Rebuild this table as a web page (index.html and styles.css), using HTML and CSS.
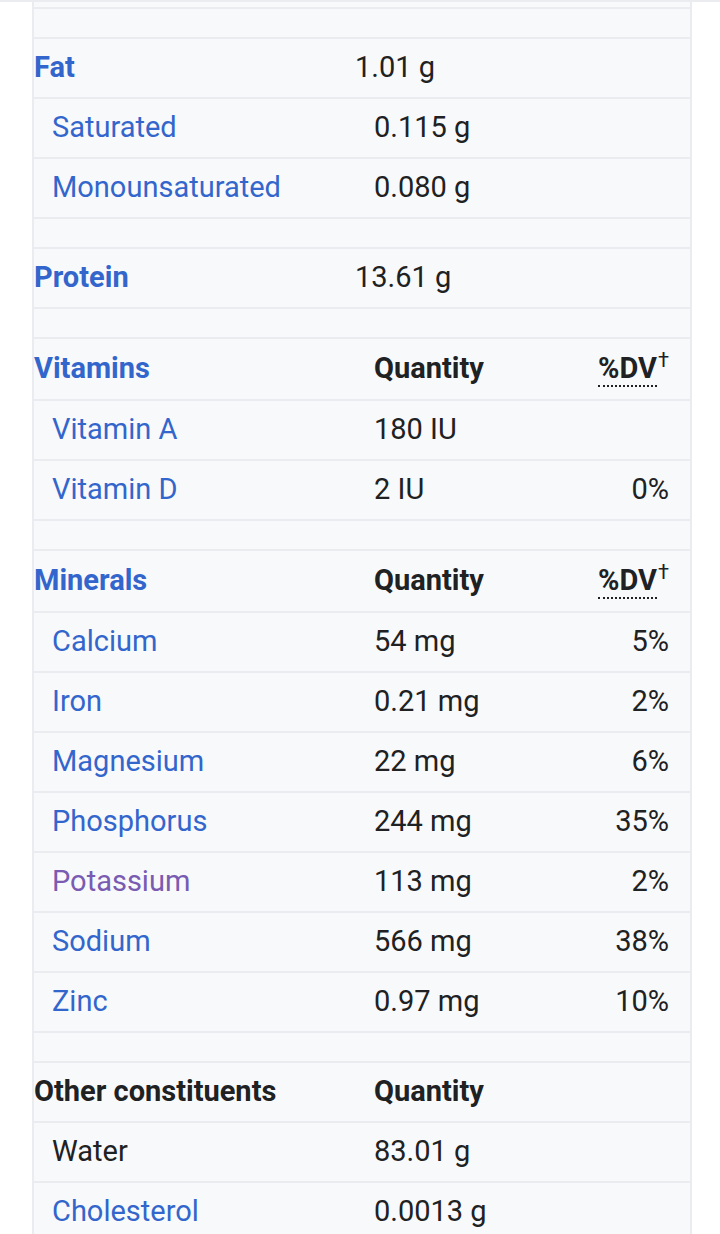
FILE: index.html
```html
<!DOCTYPE html>
<html lang="en">
<head>
<meta charset="utf-8">
<link rel="stylesheet" href="styles.css">
</head>
<body>
<div class="topline"></div>
<table class="nut">
  <colgroup><col class="c1"><col class="c2"><col class="c3"></colgroup>
  <tbody>
    <tr class="partial"><td colspan="3"></td></tr>
    <tr class="gap"><td colspan="3"></td></tr>
    <tr class="main"><th><a class="lnk">Fat</a></th><td>1.01 g</td><td></td></tr>
    <tr class="sub"><td><a class="lnk">Saturated</a></td><td class="val">0.115 g</td><td></td></tr>
    <tr class="sub"><td><a class="lnk">Monounsaturated</a></td><td class="val">0.080 g</td><td></td></tr>
    <tr class="gap"><td colspan="3"></td></tr>
    <tr class="main"><th><a class="lnk">Protein</a></th><td>13.61 g</td><td></td></tr>
    <tr class="gap"><td colspan="3"></td></tr>
    <tr class="head"><th><a class="lnk">Vitamins</a></th><th class="q">Quantity</th><th class="dv"><abbr class="abbr">%DV</abbr><sup class="dag">†</sup></th></tr>
    <tr class="sub"><td><a class="lnk">Vitamin A</a></td><td class="val">180 IU</td><td class="pct"></td></tr>
    <tr class="sub"><td><a class="lnk">Vitamin D</a></td><td class="val">2 IU</td><td class="pct">0%</td></tr>
    <tr class="gap"><td colspan="3"></td></tr>
    <tr class="head"><th><a class="lnk">Minerals</a></th><th class="q">Quantity</th><th class="dv"><abbr class="abbr">%DV</abbr><sup class="dag">†</sup></th></tr>
    <tr class="sub"><td><a class="lnk">Calcium</a></td><td class="val">54 mg</td><td class="pct">5%</td></tr>
    <tr class="sub"><td><a class="lnk">Iron</a></td><td class="val">0.21 mg</td><td class="pct">2%</td></tr>
    <tr class="sub"><td><a class="lnk">Magnesium</a></td><td class="val">22 mg</td><td class="pct">6%</td></tr>
    <tr class="sub"><td><a class="lnk">Phosphorus</a></td><td class="val">244 mg</td><td class="pct">35%</td></tr>
    <tr class="sub"><td><a class="lnk visited">Potassium</a></td><td class="val">113 mg</td><td class="pct">2%</td></tr>
    <tr class="sub"><td><a class="lnk">Sodium</a></td><td class="val">566 mg</td><td class="pct">38%</td></tr>
    <tr class="sub"><td><a class="lnk">Zinc</a></td><td class="val">0.97 mg</td><td class="pct">10%</td></tr>
    <tr class="gap"><td colspan="3"></td></tr>
    <tr class="head plain"><th class="dark">Other constituents</th><th class="q">Quantity</th><th></th></tr>
    <tr class="sub"><td>Water</td><td class="val">83.01 g</td><td></td></tr>
    <tr class="sub"><td><a class="lnk">Cholesterol</a></td><td class="val">0.0013 g</td><td></td></tr>
  </tbody>
</table>
</body>
</html>
```

FILE: styles.css
```css
html, body {
  margin: 0;
  padding: 0;
  background: #ffffff;
}
body {
  font-family: Roboto, "Noto Sans", "Liberation Sans", sans-serif;
  font-size: 29px;
  color: #202122;
  overflow: hidden;
}
.topline {
  height: 2px;
  background: #eaecf0;
}
.nut {
  margin-left: 32px;
  width: 660px;
  border-collapse: collapse;
  table-layout: fixed;
  background: #f8f9fa;
  border-left: 2px solid #eaecf0;
  border-right: 2px solid #eaecf0;
}
.c1 { width: 322px; }
.c2 { width: 200px; }
.c3 { width: auto; }
.nut tr {
  border-bottom: 2px solid #eaecf0;
}
.nut td, .nut th {
  padding: 0;
  text-align: left;
  vertical-align: middle;
  white-space: nowrap;
  line-height: 32px;
}
.partial td { height: 5px; }
.gap td { height: 28px; }
.main td, .main th { height: 56px; padding-bottom: 2px; }
.main th { font-weight: 700; }
.sub td { height: 56px; padding-bottom: 2px; padding-left: 18px; }
.sub td.val { padding-left: 19px; }
.sub td.pct { padding-left: 0; padding-right: 21px; text-align: right; }
.head th { height: 58px; padding-bottom: 2px; font-weight: 700; }
.head.plain th { height: 56px; }
.head th.q { padding-left: 19px; }
.head th.dv { text-align: right; padding-right: 21px; }
.lnk { color: #3366cc; text-decoration: none; }
.lnk.visited { color: #795cb2; }
.dark { color: #202122; }
.abbr {
  text-decoration: none;
  border-bottom: 2px dotted #202122;
  padding-bottom: 0;
}
.dag {
  font-weight: 400;
  font-size: 20px;
  line-height: 0;
  vertical-align: 11px;
  margin-left: 1px;
}
```
